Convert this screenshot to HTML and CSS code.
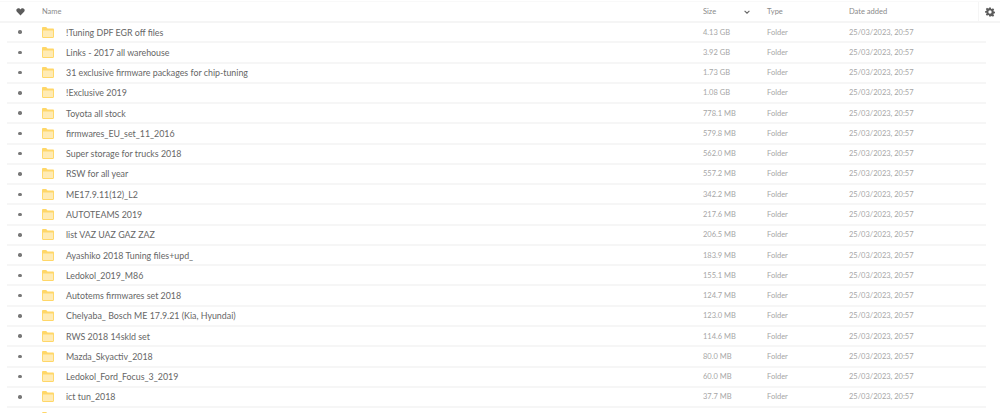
FILE: index.html
```html
<!DOCTYPE html>
<html lang="en">
<head>
    <meta charset="UTF-8">
    <title>Files</title>
    <link rel="stylesheet" href="styles.css">
</head>
<body>
    <div class="head">
        <div class="row-grid head-grid">
            <div class="col-fav">
                <svg class="heart" viewBox="0 0 16 16"><path d="M8 15 1.6 8.4C-.6 6 .9 2 4.2 2 5.8 2 7.200 3 8 4.300 8.800 3 10.200 2 11.800 2c3.300 0 4.800 4 2.600 6.400z"/></svg>
            </div>
            <div class="col-name">Name</div>
            <div class="col-size">Size <svg class="chev" viewBox="0 0 10 6"><path d="M1 1l4 4 4-4"/></svg></div>
            <div class="col-type">Type</div>
            <div class="col-date">Date added</div>
        </div>
        <div class="settings">
            <svg class="gear" viewBox="0 0 24 24"><path fill-rule="evenodd" d="M10 1h4l.6 3.200 1.900.8 2.700-1.800 2.800 2.800-1.800 2.700.8 1.900 3.200.6v4l-3.200.6-.8 1.900 1.800 2.700-2.800 2.800-2.700-1.800-1.900.8L14 23h-4l-.6-3.200-1.900-.8-2.700 1.800-2.800-2.800 1.800-2.700-.8-1.900L-.2 14v-4L3 9.400l.8-1.900L2 4.800 4.800 2l2.700 1.800 1.900-.8zM12 8a4 4 0 1 0 0 8 4 4 0 0 0 0-8z"/></svg>
        </div>
    </div>

    <div id="list" class="list"></div>

    <script>
        const files = [
            ['!Tuning DPF EGR off files', '4.13 GB'],
            ['Links - 2017 all warehouse', '3.92 GB'],
            ['31 exclusive firmware packages for chip-tuning', '1.73 GB'],
            ['!Exclusive 2019', '1.08 GB'],
            ['Toyota all stock', '778.1 MB'],
            ['firmwares_EU_set_11_2016', '579.8 MB'],
            ['Super storage for trucks 2018', '562.0 MB'],
            ['RSW for all year', '557.2 MB'],
            ['ME17.9.11(12)_L2', '342.2 MB'],
            ['AUTOTEAMS 2019', '217.6 MB'],
            ['list VAZ UAZ GAZ ZAZ', '206.5 MB'],
            ['Ayashiko 2018 Tuning files+upd_', '183.9 MB'],
            ['Ledokol_2019_M86', '155.1 MB'],
            ['Autotems firmwares set 2018', '124.7 MB'],
            ['Chelyaba_ Bosch ME 17.9.21 (Kia, Hyundai)', '123.0 MB'],
            ['RWS 2018 14skld set', '114.6 MB'],
            ['Mazda_Skyactiv_2018', '80.0 MB'],
            ['Ledokol_Ford_Focus_3_2019', '60.0 MB'],
            ['ict tun_2018', '37.7 MB']
        ];

        const folderIcon = `<svg class="folder" viewBox="0 0 13 13" preserveAspectRatio="none">
            <path class="folder-back" d="M0 2.200C0 1.500.5 1 1.200 1h3.300l1.500 1.500h5.800c.7 0 1.200.5 1.200 1.200v7.100c0 .7-.5 1.200-1.200 1.200H1.200C.5 12 0 11.500 0 10.800z"/>
            <rect class="folder-front" x="1" y="4.500" width="11" height="6.500"/>
        </svg>`;

        const list = document.getElementById('list');
        files.forEach(file => {
            const row = document.createElement('div');
            row.className = 'row-grid file-row';
            row.innerHTML = `
                <div class="col-fav"><span class="dot"></span></div>
                <div class="col-name">${folderIcon}<span class="file-name">${file[0]}</span></div>
                <div class="col-size">${file[1]}</div>
                <div class="col-type">Folder</div>
                <div class="col-date">25/03/2023, 20:57</div>
            `;
            list.appendChild(row);
        });

        // next row is cut by the window, only the top of its folder shows
        const lastRow = document.createElement('div');
        lastRow.className = 'row-grid file-row';
        lastRow.innerHTML = `<div class="col-fav"></div><div class="col-name">${folderIcon}</div>`;
        list.appendChild(lastRow);
    </script>
</body>
</html>
```

FILE: styles.css
```css
html, body {
    height: 100%;
}
body {
    margin: 0;
    overflow: hidden;
    background-color: #fff;
    color: #a6a6a6;
    font-family: Lato, "Open Sans", sans-serif;
    font-size: 7.500px;
}
.head {
    display: flex;
    height: 19px;
    margin-top: 1px;
    border-top: 1px solid #f9f9f9;
    border-bottom: 2px solid #f5f5f5;
}
.row-grid {
    display: grid;
    grid-template-columns: 26px 670px 64px 82px 1fr;
    align-items: center;
}
.head-grid {
    flex: 1;
    margin-left: 7px;
    color: #8a8a8a;
    font-size: 7.500px;
}
.settings {
    display: flex;
    align-items: center;
    justify-content: center;
    width: 21px;
    border-left: 1px solid #f5f5f5;
}
.heart {
    display: block;
    width: 9px;
    height: 9px;
    fill: #5c5c5c;
}
.gear {
    display: block;
    width: 10px;
    height: 10px;
    fill: #5c5c5c;
}
.chev {
    width: 6px;
    height: 4px;
    margin-left: 26px;
    fill: none;
    stroke: #666;
    stroke-width: 1.800;
}
.col-fav {
    display: flex;
    justify-content: center;
}
.col-name {
    display: flex;
    align-items: center;
    padding-left: 9px;
}
.list {
    margin: 0 14px 0 7px;
}
.file-row {
    height: 18.280px;
    border-bottom: 2px solid #f6f6f6;
}
.dot {
    width: 3.500px;
    height: 3.500px;
    border-radius: 50%;
    background-color: #777;
}
.folder {
    flex: none;
    width: 12px;
    height: 13px;
    margin-right: 12px;
}
.folder-back {
    fill: #ffd768;
}
.folder-front {
    fill: #ffebb5;
}
.file-name {
    color: #666;
    font-size: 8.850px;
}
```
